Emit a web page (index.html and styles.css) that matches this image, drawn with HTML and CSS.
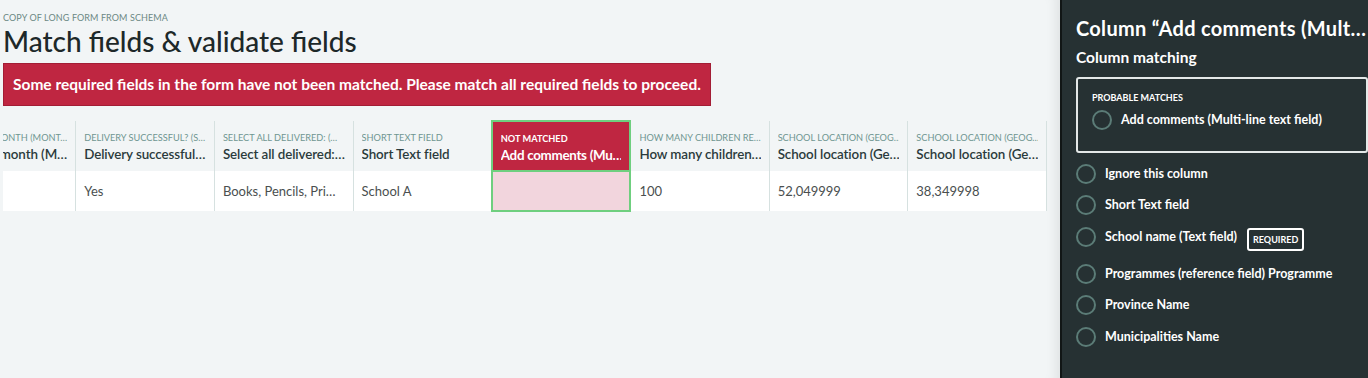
FILE: index.html
```html
<!DOCTYPE html>
<html lang="en">
<head>
    <meta charset="UTF-8">
    <title>Match fields & validate fields</title>
    <link rel="stylesheet" href="styles.css">
</head>
<body>
    <div class="page">
        <main class="main">
            <div class="eyebrow">Copy of long form from schema</div>
            <h1 class="title">Match fields &amp; validate fields</h1>
            <div class="alert">Some required fields in the form have not been matched. Please match all required fields to proceed.</div>

            <div class="table-scroll">
                <table class="grid">
                    <thead>
                        <tr>
                            <th class="clipped"><div class="label"><span>Delivery month (Mont…</span></div><div class="name"><span>Delivery month (M…</span></div></th>
                            <th><div class="label">Delivery successful? (S…</div><div class="name">Delivery successful…</div></th>
                            <th><div class="label">Select all delivered: (…</div><div class="name">Select all delivered:…</div></th>
                            <th><div class="label">Short Text field</div><div class="name">Short Text field</div></th>
                            <th class="unmatched"><div class="label">Not matched</div><div class="name">Add comments (Mu…</div></th>
                            <th><div class="label">How many children re…</div><div class="name">How many children…</div></th>
                            <th><div class="label">School location (Geog…</div><div class="name">School location (Ge…</div></th>
                            <th><div class="label">School location (Geog…</div><div class="name">School location (Ge…</div></th>
                        </tr>
                    </thead>
                    <tbody>
                        <tr>
                            <td></td>
                            <td>Yes</td>
                            <td>Books, Pencils, Pri…</td>
                            <td>School A</td>
                            <td class="unmatched"></td>
                            <td>100</td>
                            <td>52,049999</td>
                            <td>38,349998</td>
                        </tr>
                    </tbody>
                </table>
            </div>
        </main>

        <aside class="panel">
            <h2 class="panel-title">Column “Add comments (Multi-line text field)”</h2>
            <h3 class="panel-subtitle">Column matching</h3>

            <div class="probable">
                <div class="probable-label">Probable matches</div>
                <label class="option"><span class="radio"></span>Add comments (Multi-line text field)</label>
            </div>

            <div class="options">
                <label class="option"><span class="radio"></span>Ignore this column</label>
                <label class="option"><span class="radio"></span>Short Text field</label>
                <label class="option option-tall"><span class="radio"></span>School name (Text field) <span class="badge">Required</span></label>
                <label class="option"><span class="radio"></span>Programmes (reference field) Programme</label>
                <label class="option"><span class="radio"></span>Province Name</label>
                <label class="option"><span class="radio"></span>Municipalities Name</label>
            </div>
        </aside>
    </div>
</body>
</html>
```

FILE: styles.css
```css
body {
    margin: 0;
    font-family: Lato, "Open Sans", sans-serif;
    background-color: #f2f5f6;
    color: #1f2b2c;
    overflow: hidden;
}
.page {
    display: flex;
    width: 1384px;
    height: 378px;
}
.main {
    width: 1060px;
    flex-shrink: 0;
    padding: 12px 0 0 3px;
    box-sizing: border-box;
    box-shadow: inset -14px 0 12px -10px rgba(0,0,0,0.08);
}
.eyebrow {
    font-size: 9px;
    line-height: 12px;
    text-transform: uppercase;
    color: #6c8884;
    letter-spacing: 0.1px;
}
.title {
    margin: 0 0 5px;
    font-size: 28px;
    line-height: 34px;
    font-weight: 500;
    color: #1d2829;
}
.alert {
    display: inline-block;
    background-color: #bf2641;
    color: white;
    font-weight: 700;
    font-size: 15.5px;
    line-height: 20px;
    padding: 10px 9px 11px;
    border: 1px solid #a31d35;
}
.table-scroll {
    margin-top: 14px;
    width: 1044px;
    overflow: hidden;
}
.grid {
    border-collapse: collapse;
    margin-left: -66px;
    table-layout: fixed;
    width: 1110px;
}
.grid th,
.grid td {
    width: 122.75px;
    padding: 0 8px;
    text-align: left;
    border-right: 1px solid #d6e1e0;
    white-space: nowrap;
    overflow: hidden;
}
.grid th {
    height: 50px;
    padding-top: 10px;
    box-sizing: border-box;
    font-weight: 400;
    vertical-align: top;
}
.grid td {
    height: 38px;
    background-color: white;
    font-size: 13px;
    color: #4a4f4f;
}
.label,
.name {
    overflow: hidden;
    white-space: nowrap;
}
.label {
    font-size: 9.2px;
    line-height: 14px;
    text-transform: uppercase;
    color: #6f9691;
}
.name {
    font-size: 13.4px;
    line-height: 19px;
    font-weight: 600;
    letter-spacing: -0.1px;
    color: #2b3b3c;
}
.clipped .label,
.clipped .name {
    display: flex;
    justify-content: flex-end;
}
.grid th.unmatched {
    background-color: #bf2641;
    border: 2px solid #6fcf7f;
    border-bottom: none;
}
.grid th.unmatched .label,
.grid th.unmatched .name {
    color: white;
    font-weight: 700;
}
.grid th.unmatched .name {
    letter-spacing: -0.3px;
}
.grid td.unmatched {
    background-color: #f2d5dd;
    border: 2px solid #6fcf7f;
}
.panel {
    width: 324px;
    flex-shrink: 0;
    background-color: #263133;
    border-left: 2px solid #111616;
    padding: 16px 16px 0 14px;
    box-sizing: border-box;
    color: white;
}
.panel-title {
    margin: 0;
    font-size: 20px;
    line-height: 24px;
    font-weight: 700;
    letter-spacing: 0.3px;
    white-space: nowrap;
    overflow: hidden;
    text-overflow: ellipsis;
}
.panel-subtitle {
    margin: 7px 0 10px;
    font-size: 15.5px;
    line-height: 20px;
    font-weight: 700;
}
.probable {
    border: 2px solid #e4e8e8;
    border-radius: 3px;
    padding: 13px 14px 0;
    height: 76px;
    box-sizing: border-box;
}
.probable-label {
    font-size: 9px;
    line-height: 12px;
    font-weight: 700;
    text-transform: uppercase;
    margin-bottom: 6px;
}
.options {
    margin-top: 5px;
}
.option {
    display: flex;
    align-items: flex-start;
    font-size: 12.5px;
    line-height: 20px;
    font-weight: 700;
    padding: 5.75px 0;
}
.option-tall {
    padding-bottom: 7px;
}
.probable .option {
    padding: 0;
}
.radio {
    width: 16px;
    height: 16px;
    border: 2px solid #5b7c77;
    border-radius: 50%;
    margin-right: 9px;
    flex-shrink: 0;
}
.badge {
    margin-left: 10px;
    margin-top: 1px;
    font-size: 9px;
    line-height: 15px;
    padding: 2px 4px;
    border: 2px solid white;
    border-radius: 3px;
    text-transform: uppercase;
}
```
